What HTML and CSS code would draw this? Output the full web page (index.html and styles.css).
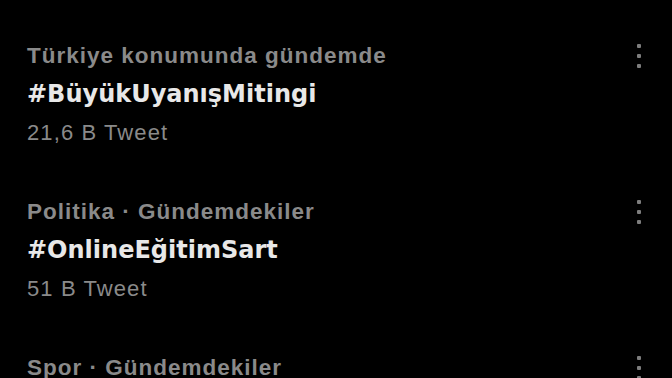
FILE: index.html
```html
<!DOCTYPE html>
<html>
<head>
  <link rel="stylesheet" href="styles.css">
</head>
<body>
  <div class="trends">
    <div class="trend">
      <div class="trend-text">
        <div class="context">Türkiye konumunda gündemde</div>
        <div class="name">#BüyükUyanışMitingi</div>
        <div class="count">21,6 B Tweet</div>
      </div>
      <div class="more"><span></span><span></span><span></span></div>
    </div>
    <div class="trend">
      <div class="trend-text">
        <div class="context">Politika · Gündemdekiler</div>
        <div class="name">#OnlineEğitimSart</div>
        <div class="count">51 B Tweet</div>
      </div>
      <div class="more"><span></span><span></span><span></span></div>
    </div>
    <div class="trend">
      <div class="trend-text">
        <div class="context">Spor · Gündemdekiler</div>
      </div>
      <div class="more"><span></span><span></span><span></span></div>
    </div>
  </div>
</body>
</html>
```

FILE: styles.css
```css
body {
  margin: 0;
  background: #000;
  font-family: 'Liberation Sans', Arial, sans-serif;
  overflow: hidden;
}

.trends {
  display: flex;
  flex-direction: column;
}

.trend {
  display: flex;
  justify-content: space-between;
  align-items: flex-start;
  padding: 36px 31px 24px 27px;
  height: 96px;
}

.trend-text {
  display: flex;
  flex-direction: column;
}

.context {
  color: #8a8a8a;
  font-weight: bold;
  font-size: 22.5px;
  letter-spacing: 1px;
  line-height: 40px;
  height: 38px;
}

.name {
  color: #e8e8e8;
  font-family: 'DejaVu Sans', 'Liberation Sans', sans-serif;
  font-weight: bold;
  font-size: 24px;
  line-height: 40px;
}

.count {
  color: #8a8a8a;
  font-size: 22px;
  letter-spacing: 1.1px;
  line-height: 38px;
}

.more {
  display: flex;
  flex-direction: column;
  gap: 6px;
  padding-top: 8px;
}

.more span {
  width: 4px;
  height: 4px;
  background: #7d7d7d;
  border-radius: 1px;
}
```
